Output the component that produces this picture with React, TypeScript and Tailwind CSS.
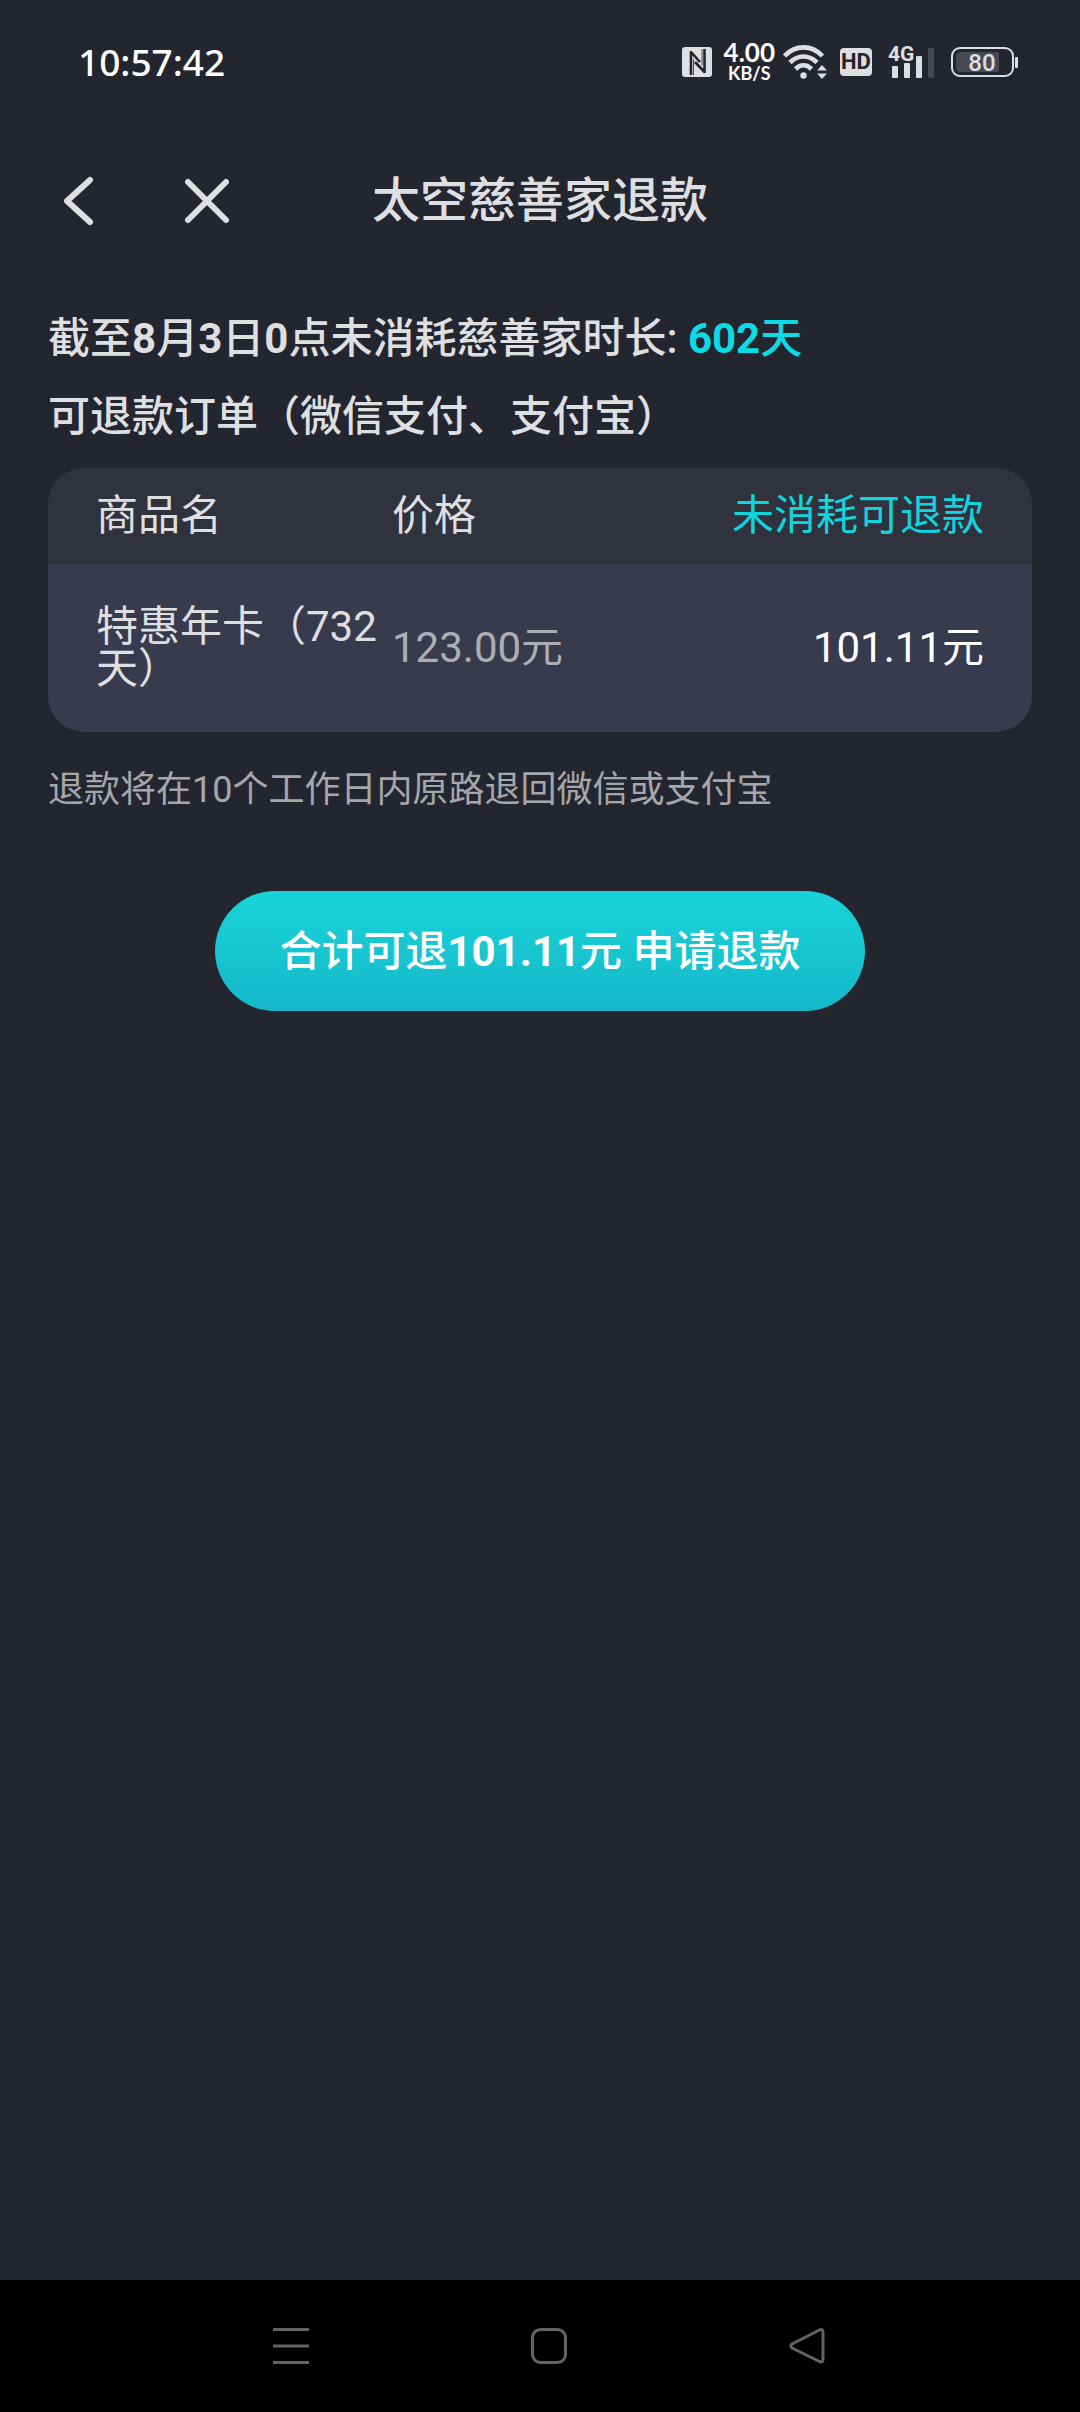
type Order = {
  id: number;
  name: string;
  price: string;
  refundable: string;
};

const orders: Order[] = [
  {
    id: 1,
    name: '特惠年卡（732天）',
    price: '123.00元',
    refundable: '101.11元',
  },
];

function NfcIcon() {
  return (
    <svg width="30" height="30" viewBox="0 0 30 30" aria-hidden="true">
      <rect width="30" height="30" rx="3" fill="#dedfe1" />
      <path
        d="M9 28 V5 L18 15 M22.5 2 V25 L13 15"
        fill="none"
        stroke="#24262f"
        strokeWidth="2.6"
        strokeLinejoin="round"
      />
      <path d="M11.5 12 V28 M20 2 V18" stroke="#24262f" strokeWidth="0.8" />
    </svg>
  );
}

function WifiIcon() {
  return (
    <svg width="45" height="34" viewBox="0 0 45 34" aria-hidden="true">
      <g fill="none" stroke="#dedfe1" strokeWidth="4.6">
        <path d="M1.5 11 C12.5 -0.5 28.5 -0.5 39.5 11" />
        <path d="M7 17.5 C15 9.5 26 9.5 34 17.5" />
        <path d="M12.5 24 C17.5 19 23.5 19 28.5 24" />
      </g>
      <circle cx="20.5" cy="30.5" r="3.2" fill="#dedfe1" />
      <path d="M39 20 L44 25.5 H34 Z M39 34 L44 28.5 H34 Z" fill="#dedfe1" />
    </svg>
  );
}

function SignalIcon() {
  return (
    <svg width="50" height="50" viewBox="-3 -8 50 50" aria-hidden="true">
      <text
        x="-1"
        y="16"
        fontSize="21"
        fontWeight="700"
        fill="#dedfe1"
        className="font-['Liberation_Sans_Narrow','Roboto',sans-serif]"
      >
        4G
      </text>
      <rect x="3" y="21" width="6" height="12" rx="1" fill="#dedfe1" />
      <rect x="15" y="18" width="6" height="15" rx="1" fill="#dedfe1" />
      <rect x="27" y="11" width="6" height="22" rx="1" fill="#dedfe1" />
      <rect x="39" y="3" width="6" height="30" rx="1" fill="#484a52" />
    </svg>
  );
}

function BatteryIcon() {
  return (
    <svg width="68" height="30" viewBox="0 0 68 30" aria-hidden="true">
      <rect x="1" y="1" width="61" height="28" rx="8" fill="none" stroke="#dedfe1" strokeWidth="2" />
      <path d="M10 5 H48 V25 H10 Q5 25 5 20 V10 Q5 5 10 5 Z" fill="#484a52" />
      <rect x="64" y="10" width="3" height="11" rx="1" fill="#dedfe1" />
      <text
        x="31"
        y="24"
        fontSize="24"
        fontWeight="500"
        textAnchor="middle"
        fill="#dedfe1"
        className="font-['Roboto',sans-serif]"
      >
        80
      </text>
    </svg>
  );
}

function StatusBar() {
  return (
    <div className="flex h-[124px] items-center justify-between pr-[61px] pl-[78px]">
      <span className="pb-[2px] font-['Noto_Sans',sans-serif] text-[37px] leading-none font-medium text-white">
        10:57:42
      </span>
      <div className="flex items-center">
        <NfcIcon />
        <div className="mr-2 ml-3 flex flex-col items-center font-['Lato',sans-serif] font-bold text-white">
          <span className="text-[26px] leading-[22px]">4.00</span>
          <span className="text-[18px] leading-[20px]">KB/S</span>
        </div>
        <WifiIcon />
        <span className="mr-[14px] ml-3 flex h-7 w-8 items-center justify-center rounded bg-[#dedfe1] font-['Liberation_Sans_Narrow','Roboto',sans-serif] text-[22px] leading-none font-bold text-[#24262f]">
          HD
        </span>
        <SignalIcon />
        <span className="pl-[15px]">
          <BatteryIcon />
        </span>
      </div>
    </div>
  );
}

function Header() {
  return (
    <header className="grid h-[154px] grid-cols-[1fr_auto_1fr] items-center">
      <div className="flex items-center gap-[91px] pl-[62px]">
        <button type="button" aria-label="返回">
          <svg width="32" height="50" viewBox="0 0 32 50" fill="none" stroke="#dedfe1" strokeWidth="6">
            <path d="M28 4 L5 25 L28 46" strokeLinecap="round" strokeLinejoin="round" />
          </svg>
        </button>
        <button type="button" aria-label="关闭">
          <svg width="44" height="46" viewBox="0 0 44 46" fill="none" stroke="#dedfe1" strokeWidth="6">
            <path d="M3 4 L41 42 M41 4 L3 42" strokeLinecap="round" />
          </svg>
        </button>
      </div>
      <h1 className="text-[48px] leading-none font-medium">太空慈善家退款</h1>
    </header>
  );
}

function OrderTable() {
  return (
    <div className="overflow-hidden rounded-[36px]">
      <table className="w-full table-fixed text-left text-[42px] leading-none">
        <thead className="bg-[#30333e]">
          <tr className="h-24">
            <th className="w-[344px] pl-12 font-normal">商品名</th>
            <th className="font-normal">价格</th>
            <th className="pr-12 text-right font-normal text-[#10d5de]">未消耗可退款</th>
          </tr>
        </thead>
        <tbody className="bg-[#383b4d]">
          {orders.map((order) => (
            <tr key={order.id} className="h-[168px]">
              <td className="pl-12">{order.name}</td>
              <td className="text-[#adaeb5]">{order.price}</td>
              <td className="pr-12 text-right text-white">{order.refundable}</td>
            </tr>
          ))}
        </tbody>
      </table>
    </div>
  );
}

function NavBar() {
  return (
    <nav className="grid h-[132px] grid-cols-3 items-center justify-items-center bg-black pr-36 pl-[162px]">
      <button type="button" aria-label="菜单">
        <svg width="36" height="36" viewBox="0 0 36 36" stroke="#636363" strokeWidth="3">
          <path d="M0 1.5 H36 M0 18 H36 M0 34.5 H36" />
        </svg>
      </button>
      <button type="button" aria-label="主页">
        <svg width="36" height="36" viewBox="0 0 36 36" fill="none" stroke="#636363" strokeWidth="3">
          <rect x="1.5" y="1.5" width="33" height="33" rx="8" />
        </svg>
      </button>
      <button type="button" aria-label="后退">
        <svg width="36" height="36" viewBox="0 0 36 36" fill="none" stroke="#636363" strokeWidth="3">
          <path
            d="M30.5 2 L3 16 Q0.5 18 3 20 L30.5 33.5 Q34 35 34 31.5 V4 Q34 0.5 30.5 2 Z"
            strokeLinejoin="round"
          />
        </svg>
      </button>
    </nav>
  );
}

export default function App() {
  return (
    <div
      lang="zh-CN"
      className="flex min-h-screen flex-col bg-[#24262f] font-['Roboto','Noto_Sans_CJK_SC',sans-serif] text-[#dedfe1]"
    >
      <StatusBar />
      <Header />
      <main className="flex grow flex-col px-12 pt-[22px]">
        <h2 className="text-[42px] leading-[78px] font-medium">
          截至<b>8</b>月<b>3</b>日<b>0</b>点未消耗慈善家时长:{' '}
          <span className="text-[#0bdbe4]">
            <b>602</b>天
          </span>
        </h2>
        <h2 className="mb-3 text-[42px] leading-[78px] font-medium">可退款订单（微信支付、支付宝）</h2>
        <OrderTable />
        <p className="mt-[34px] text-[36px] leading-[48px] text-[#a6a7ab]">
          退款将在10个工作日内原路退回微信或支付宝
        </p>
        <button
          type="button"
          className="mt-[77px] h-[120px] self-center rounded-full bg-linear-to-b from-[#19d4db] to-[#15b8c8] px-16 text-[42px] font-medium text-white"
        >
          合计可退<b>101.11</b>元 申请退款
        </button>
      </main>
      <NavBar />
    </div>
  );
}
